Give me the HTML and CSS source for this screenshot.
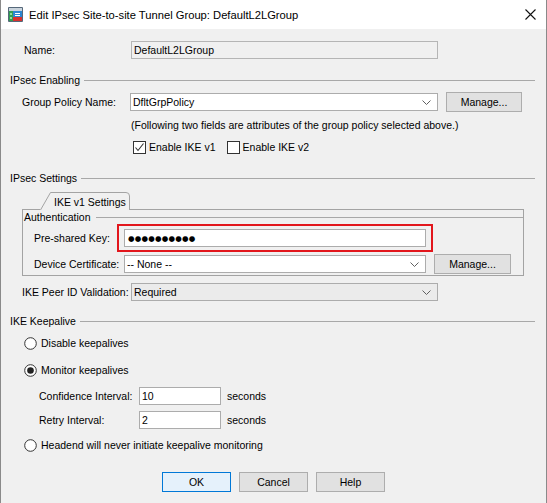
FILE: index.html
```html
<!DOCTYPE html>
<html>
<head>
<meta charset="utf-8">
<link rel="stylesheet" href="styles.css">
</head>
<body>
<div class="window">
  <div class="titlebar">
    <svg class="app-icon" width="15" height="15" viewBox="0 0 15 15">
      <rect x="0" y="0" width="15" height="15" rx="1" fill="#56687a"/>
      <rect x="1" y="1" width="13" height="3" fill="#c9d3dc"/>
      <rect x="1" y="4" width="4" height="10" fill="#2f9d52"/>
      <rect x="2" y="6" width="2" height="2" fill="#8fdc9f"/>
      <rect x="2" y="10" width="2" height="2" fill="#8fdc9f"/>
      <rect x="5" y="4" width="9" height="6" fill="#2b86d0"/>
      <rect x="5" y="10" width="9" height="4" fill="#d6312e"/>
      <path d="M7 6.5h5M7 8.5h5" stroke="#ffffff" stroke-width="1"/>
    </svg>
    <span class="title">Edit IPsec Site-to-site Tunnel Group: DefaultL2LGroup</span>
    <svg class="close" width="11" height="11" viewBox="0 0 11 11">
      <path d="M0.5 0.5L10.5 10.5M10.5 0.5L0.5 10.5" stroke="#111" stroke-width="1.1"/>
    </svg>
  </div>

  <div class="content">
    <div class="row row-name">
      <span class="label label-main name-label">Name:</span>
      <div class="field field-disabled w-main">DefaultL2LGroup</div>
    </div>

    <div class="group-hdr hdr-enabling">IPsec Enabling</div>

    <div class="row row-gp">
      <span class="label label-main">Group Policy Name:</span>
      <div class="combo w-combo">
        <span class="combo-text">DfltGrpPolicy</span>
        <svg class="chev" width="9" height="5" viewBox="0 0 9 5"><polyline points="0.5,0.5 4.5,4.5 8.5,0.5" fill="none" stroke="#606060"/></svg>
      </div>
      <button class="btn btn-manage">Manage...</button>
    </div>

    <div class="note">(Following two fields are attributes of the group policy selected above.)</div>

    <div class="checks">
      <label class="check">
        <svg width="13" height="13" viewBox="0 0 13 13"><rect x="0.5" y="0.5" width="12" height="12" fill="#fff" stroke="#333"/><polyline points="2.5,6.5 5,9.5 10.5,2.5" fill="none" stroke="#333" stroke-width="1.1"/></svg>
        <span>Enable IKE v1</span>
      </label>
      <label class="check">
        <svg width="13" height="13" viewBox="0 0 13 13"><rect x="0.5" y="0.5" width="12" height="12" fill="#fff" stroke="#333"/></svg>
        <span>Enable IKE v2</span>
      </label>
    </div>

    <div class="group-hdr hdr-settings">IPsec Settings</div>

    <div class="tabstrip">
      <div class="tab-lead"></div>
      <div class="tab">
        <svg class="tab-shape" width="90" height="18" viewBox="0 0 90 18"><path d="M0.5 18 L10.5 0.5 H86 Q89.5 0.5 89.5 4 V18" fill="#f0f0f0" stroke="#a3a3a3"/></svg>
        <span class="tab-label">IKE v1 Settings</span>
      </div>
      <div class="tab-fill"></div>
    </div>

    <div class="panel">
      <div class="group-hdr hdr-auth">Authentication</div>
      <div class="row row-psk">
        <span class="label label-panel">Pre-shared Key:</span>
        <div class="highlight">
          <div class="field w-panel dots">●●●●●●●●●●</div>
        </div>
      </div>
      <div class="row row-cert">
        <span class="label label-panel">Device Certificate:</span>
        <div class="combo w-panel">
          <span class="combo-text">-- None --</span>
          <svg class="chev" width="9" height="5" viewBox="0 0 9 5"><polyline points="0.5,0.5 4.5,4.5 8.5,0.5" fill="none" stroke="#606060"/></svg>
        </div>
        <button class="btn btn-manage2">Manage...</button>
      </div>
    </div>

    <div class="row row-peer">
      <span class="label label-main">IKE Peer ID Validation:</span>
      <div class="combo combo-gray w-main">
        <span class="combo-text">Required</span>
        <svg class="chev" width="9" height="5" viewBox="0 0 9 5"><polyline points="0.5,0.5 4.5,4.5 8.5,0.5" fill="none" stroke="#606060"/></svg>
      </div>
    </div>

    <div class="group-hdr hdr-keep">IKE Keepalive</div>

    <label class="radio radio-1">
      <svg width="13" height="13" viewBox="0 0 13 13"><circle cx="6.5" cy="6.5" r="5.8" fill="#fff" stroke="#333"/></svg>
      <span>Disable keepalives</span>
    </label>
    <label class="radio radio-2">
      <svg width="13" height="13" viewBox="0 0 13 13"><circle cx="6.5" cy="6.5" r="5.8" fill="#fff" stroke="#333"/><circle cx="6.5" cy="6.5" r="3.3" fill="#222"/></svg>
      <span>Monitor keepalives</span>
    </label>

    <div class="row row-conf">
      <span class="label label-ka">Confidence Interval:</span>
      <div class="field w-small">10</div>
      <span class="unit">seconds</span>
    </div>
    <div class="row row-retry">
      <span class="label label-ka">Retry Interval:</span>
      <div class="field w-small">2</div>
      <span class="unit">seconds</span>
    </div>

    <label class="radio radio-3">
      <svg width="13" height="13" viewBox="0 0 13 13"><circle cx="6.5" cy="6.5" r="5.8" fill="#fff" stroke="#333"/></svg>
      <span>Headend will never initiate keepalive monitoring</span>
    </label>

    <div class="buttons">
      <button class="btn btn-dlg btn-default">OK</button>
      <button class="btn btn-dlg">Cancel</button>
      <button class="btn btn-dlg">Help</button>
    </div>
  </div>
</div>
</body>
</html>
```

FILE: styles.css
```css
html, body {
  margin: 0;
  padding: 0;
  background: #ffffff;
}

body {
  font-family: "Liberation Sans", Arial, sans-serif;
  font-size: 10.5px;
  color: #000;
}

.window {
  width: 547px;
  height: 503px;
  box-sizing: border-box;
  border-left: 1px solid #8a8a8a;
  border-right: 1px solid #8a8a8a;
  background: #f0f0f0;
  overflow: hidden;
}

.titlebar {
  height: 29px;
  background: #ffffff;
  display: flex;
  align-items: center;
}

.app-icon {
  margin-left: 7px;
  flex: none;
}

.title {
  margin-left: 6px;
  font-size: 11.2px;
  color: #000;
  flex: 1;
}

.close {
  margin-right: 10px;
  flex: none;
}

.content {
  padding: 12px 11px 0 9px;
}

.row {
  display: flex;
  align-items: center;
}

.label {
  flex: none;
  white-space: nowrap;
}

.label-main {
  width: 109px;
}

.name-label {
  padding-left: 2px;
  width: 107px;
}

.row-name, .row-gp, .row-peer {
  margin-left: 12px;
}

.row-name { height: 18px; }

.field, .combo {
  box-sizing: border-box;
  height: 18px;
  border: 1px solid #acacac;
  background: #fff;
  display: flex;
  align-items: center;
  padding-left: 2px;
  flex: none;
}

.field-disabled {
  background: #f0f0f0;
  border-color: #b5b5b5;
}

.w-main { width: 307px; }
.w-combo { width: 308px; margin-left: -1px; }

.combo {
  justify-content: space-between;
  padding-right: 6px;
}

.combo-gray {
  background: #ebebeb;
}

.chev { flex: none; }

.btn {
  font-family: "Liberation Sans", Arial, sans-serif;
  font-size: 10.5px;
  color: #000;
  background: #e1e1e1;
  border: 1px solid #adadad;
  height: 20px;
  padding: 0;
  box-sizing: border-box;
  flex: none;
}

.btn-manage {
  width: 76px;
  margin-left: 8px;
}

.group-hdr {
  display: flex;
  align-items: center;
  height: 14px;
  white-space: nowrap;
}

.group-hdr::after {
  content: "";
  flex: 1;
  border-top: 1px solid #a8a8a8;
  margin-left: 4px;
}

.hdr-enabling { margin-top: 14px; }

.row-gp {
  margin-top: 5px;
  height: 20px;
}

.note {
  margin-top: 6px;
  margin-left: 121px;
  height: 14px;
  line-height: 14px;
}

.checks {
  margin-top: 8px;
  margin-left: 123px;
  display: flex;
  height: 14px;
  align-items: center;
}

.check {
  display: flex;
  align-items: center;
  gap: 3px;
}

.check + .check {
  margin-left: 11px;
}

.check svg { flex: none; }

.hdr-settings { margin-top: 17px; }

.tabstrip {
  margin: 7px 11px 0 12px;
  display: flex;
  height: 18px;
}

.tab-lead {
  width: 18px;
  border-bottom: 1px solid #a3a3a3;
}

.tab {
  width: 90px;
  display: grid;
}

.tab-shape, .tab-label {
  grid-area: 1 / 1;
}

.tab-label {
  align-self: center;
  justify-self: start;
  margin-left: 14px;
  padding-top: 1px;
}

.tab-fill {
  flex: 1;
  border-bottom: 1px solid #a3a3a3;
}

.panel {
  margin: 0 11px 0 12px;
  border: 1px solid #a3a3a3;
  border-top: none;
  padding: 0 0 1px 1px;
}

.hdr-auth::after {
  margin-left: 5px;
}

.row-psk {
  margin-top: 4px;
  margin-left: 10px;
  height: 20px;
}

.label-panel {
  width: 90px;
}

.w-panel { width: 302px; }

.highlight {
  position: relative;
}

.highlight::after {
  content: "";
  position: absolute;
  left: -7px;
  right: -7px;
  top: -5px;
  bottom: -5px;
  border: 2px solid #e2161c;
  pointer-events: none;
}

.dots {
  font-family: "DejaVu Sans", sans-serif;
  font-size: 7.5px;
  letter-spacing: 0.2px;
  padding-left: 3px;
  color: #000;
}

.row-cert {
  margin-top: 6px;
  margin-left: 10px;
  height: 20px;
}

.btn-manage2 {
  width: 77px;
  margin-left: 8px;
}

.row-peer {
  margin-top: 6px;
  height: 20px;
}

.hdr-keep { margin-top: 12px; }

.radio {
  display: flex;
  align-items: center;
  gap: 4px;
  height: 14px;
  margin-left: 14px;
}

.radio svg { flex: none; }

.radio-1 { margin-top: 8px; }
.radio-2 { margin-top: 13px; }

.row-conf {
  margin-top: 10px;
  margin-left: 29px;
  height: 18px;
}

.row-retry {
  margin-top: 6px;
  margin-left: 29px;
  height: 18px;
}

.label-ka { width: 100px; }

.w-small { width: 82px; }

.unit { margin-left: 6px; }

.radio-3 { margin-top: 9px; }

.buttons {
  margin-top: 20px;
  display: flex;
  justify-content: center;
  gap: 8px;
  margin-right: -2px;
}

.btn-dlg {
  width: 69px;
  height: 20px;
}

.btn-default {
  background: #e5f1fb;
  border-color: #0078d7;
}
```
